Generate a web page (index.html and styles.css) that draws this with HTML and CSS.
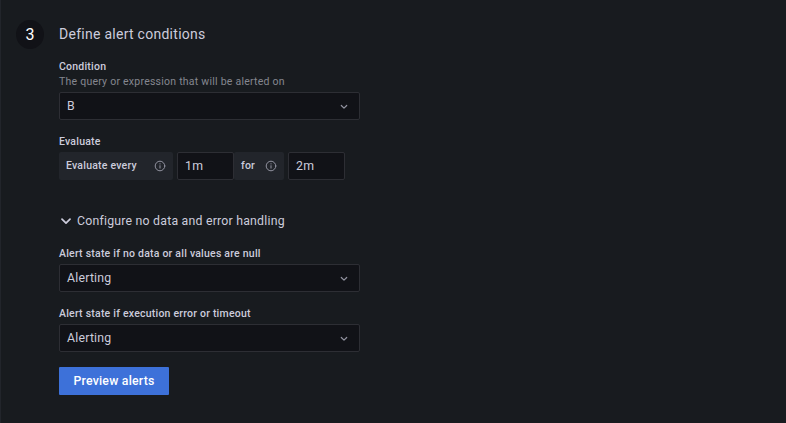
FILE: index.html
```
<!DOCTYPE html>
<html lang="en">
<head>
<meta charset="utf-8">
<title>Define alert conditions</title>
<link rel="stylesheet" href="styles.css">
</head>
<body>
<main class="step">
  <div class="step-number">3</div>
  <section class="content">
    <h2 class="title"><span>Define alert conditions</span></h2>
    <div class="label"><span>Condition</span></div>
    <div class="description"><span>The query or expression that will be alerted on</span></div>
    <div class="select condition"><span>B</span><svg class="chevron" viewBox="0 0 8 6"><path d="M1.3 1.5 4 4.2 6.7 1.5"/></svg></div>
    <div class="label evaluate-label"><span>Evaluate</span></div>
    <div class="inline-row">
      <div class="inline-label every"><span>Evaluate every</span><svg class="info" viewBox="0 0 12 12"><circle cx="6" cy="6" r="4.8"/><path d="M6 5.7v2.4M6 3.7v.3"/></svg></div>
      <div class="input">1m</div>
      <div class="inline-label for"><span>for</span><svg class="info" viewBox="0 0 12 12"><circle cx="6" cy="6" r="4.8"/><path d="M6 5.7v2.4M6 3.7v.3"/></svg></div>
      <div class="input">2m</div>
    </div>
    <div class="collapse"><svg class="collapse-icon" viewBox="0 0 10 7"><path d="M1 1.2 5 5.2 9 1.2"/></svg><span>Configure no data and error handling</span></div>
    <div class="label"><span>Alert state if no data or all values are null</span></div>
    <div class="select"><span>Alerting</span><svg class="chevron" viewBox="0 0 8 6"><path d="M1.3 1.5 4 4.2 6.7 1.5"/></svg></div>
    <div class="label error-label"><span>Alert state if execution error or timeout</span></div>
    <div class="select"><span>Alerting</span><svg class="chevron" viewBox="0 0 8 6"><path d="M1.3 1.5 4 4.2 6.7 1.5"/></svg></div>
    <button class="preview" type="button">Preview alerts</button>
  </section>
</main>
</body>
</html>
```
FILE: styles.css
```
* { box-sizing: border-box; }
body {
  margin: 0;
  height: 423px;
  overflow: hidden;
  background: #181b1f;
  border-left: 1px solid #22252b;
  color: #ccccdc;
  font: 400 12.3px/16px Roboto, sans-serif;
  letter-spacing: 0.22px;
}
.step { display: flex; padding: 20px 0 0 15px; }
.step-number {
  width: 28px;
  height: 29px;
  margin-right: 15px;
  border-radius: 50%;
  background: #111217;
  color: #fff;
  font-size: 16px;
  line-height: 29px;
  letter-spacing: 0;
  text-align: center;
}
.content { width: 301px; }
.title { margin: 4px 0 16px; font-size: 14px; font-weight: 400; line-height: 20px; letter-spacing: 0.27px; }
.label { height: 13px; font-size: 10.5px; font-weight: 500; line-height: 13px; margin-bottom: 4px; }
.description { margin-top: -2px; height: 14px; margin-bottom: 3px; color: #858790; font-size: 10.5px; line-height: 14px; letter-spacing: 0.24px; }
.select {
  display: flex;
  align-items: center;
  justify-content: space-between;
  height: 28px;
  padding: 0 11px 0 7px;
  border: 1px solid #2d2e34;
  border-radius: 2px;
  background: #111217;
}
.chevron { width: 8px; height: 6px; margin-top: 2px; }
svg { fill: none; stroke: #9293a0; stroke-width: 1.2; stroke-linecap: round; stroke-linejoin: round; }
.evaluate-label { margin-top: 15px; }
.inline-row { display: flex; height: 28px; margin-bottom: 33px; }
.inline-label {
  display: flex;
  align-items: center;
  justify-content: space-between;
  padding: 0 7px;
  border-radius: 2px;
  background: #22252b;
  font-size: 10.5px;
  font-weight: 500;
}
.every { width: 114px; margin-right: 4px; }
.for { width: 50px; margin-right: 4px; }
.info { width: 12px; height: 12px; stroke-width: 1; }
.input {
  width: 57px;
  padding: 0 7px;
  border: 1px solid #2d2e34;
  border-radius: 2px;
  background: #111217;
  line-height: 26px;
}
.collapse { display: flex; align-items: center; height: 16px; margin-bottom: 18px; }
.collapse-icon { width: 10px; height: 7px; margin: 0 6px 0 2px; stroke: #ccccdc; stroke-width: 1.7; }
.error-label { margin-top: 15px; }
.preview {
  display: block;
  width: 110px;
  height: 28px;
  margin-top: 15px;
  padding: 0;
  border: 0;
  border-radius: 1px;
  background: #3d71d9;
  color: #fff;
  font: 500 12.3px/28px Roboto, sans-serif;
  letter-spacing: 0.22px;
}
```
